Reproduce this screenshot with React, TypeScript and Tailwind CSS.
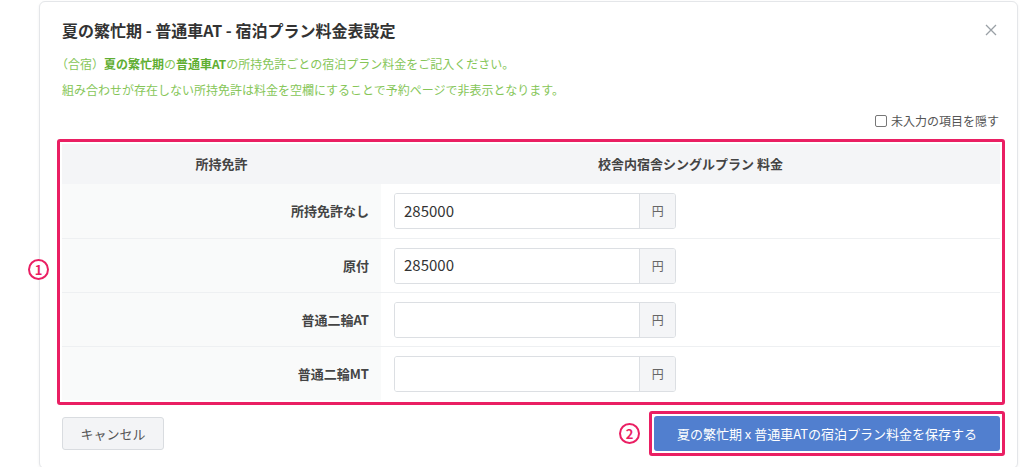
import React from "react";

const rows = [
  { label: "所持免許なし", value: "285000" },
  { label: "原付", value: "285000" },
  { label: "普通二輪AT", value: "" },
  { label: "普通二輪MT", value: "" },
];

const Mark = ({ n }: { n: string }) => (
  <span className="flex h-[21px] w-[21px] items-center justify-center rounded-full border-2 border-[#ea1f63] bg-white text-[13px] font-bold leading-none text-[#ea1f63]">
    {n}
  </span>
);

export default function App() {
  return (
    <div className="min-h-[467px] w-[1024px] bg-white font-['Noto_Sans_CJK_JP',sans-serif] text-[#333]">
      <div className="relative ml-[39px] mt-[1px] w-[979px] rounded-md border border-[#e4e6e9] bg-white pb-[12px] pl-[22px] pr-[17px] pt-[16px] shadow-[0_1px_3px_rgba(0,0,0,0.06)]">
        {/* header */}
        <div className="flex items-center justify-between">
          <h1 className="text-[16px] font-bold leading-[24px] text-[#333]">
            夏の繁忙期 - 普通車AT - 宿泊プラン料金表設定
          </h1>
          <button className="mr-[3px] text-[#9aa0a6]">
            <svg width="12" height="12" viewBox="0 0 12 12" stroke="currentColor" strokeWidth="1.3">
              <path d="M1 1l10 10M11 1L1 11" />
            </svg>
          </button>
        </div>

        <div className="mt-[9px] -ml-[6px] text-[12px] leading-[26px] text-[#86c658]">
          <p>
            （合宿）<b className="text-[#5fae32]">夏の繁忙期</b>の
            <b className="text-[#5fae32]">普通車AT</b>
            の所持免許ごとの宿泊プラン料金をご記入ください。
          </p>
          <p className="ml-[6px]">
            組み合わせが存在しない所持免許は料金を空欄にすることで予約ページで非表示となります。
          </p>
        </div>

        <div className="mt-[8px] flex h-[20px] items-center justify-end gap-[4px] pr-[1px] text-[12px] text-[#555]">
          <span className="h-[12px] w-[12px] rounded-[2px] border border-[#777] bg-white" />
          <span>未入力の項目を隠す</span>
        </div>

        {/* table, outlined */}
        <div className="relative -mx-[5px] mt-[8px] rounded-[3px] border-[3px] border-[#ea1f63] p-[2px]">
          <div className="absolute -left-[32px] top-[117px]">
            <Mark n="1" />
          </div>
          <div className="grid grid-cols-[319px_1fr]">
            <div className="flex h-[40px] items-center justify-center bg-[#f4f5f7] text-[13px] font-bold text-[#444]">
              所持免許
            </div>
            <div className="flex h-[40px] items-center justify-center bg-[#f4f5f7] text-[13px] font-bold text-[#444]">
              校舎内宿舎シングルプラン 料金
            </div>
            {rows.map((r, i) => (
              <React.Fragment key={r.label}>
                <div
                  className={`flex h-[54px] items-center justify-end bg-[#f9fafa] pr-[12px] text-[13px] font-bold text-[#444] ${
                    i > 0 ? "border-t border-[#eef0f2]" : ""
                  }`}
                >
                  {r.label}
                </div>
                <div
                  className={`flex h-[54px] items-center bg-white pl-[13px] ${
                    i > 0 ? "border-t border-[#eef0f2]" : ""
                  }`}
                >
                  <div className="flex h-[36px] w-[282px] overflow-hidden rounded-[3px] border border-[#dcdfe3]">
                    <input
                      defaultValue={r.value}
                      className="w-[246px] bg-white px-[9px] text-[15px] text-[#333] outline-none"
                    />
                    <span className="flex w-[36px] items-center justify-center border-l border-[#dcdfe3] bg-[#f4f5f7] text-[12px] text-[#666]">
                      円
                    </span>
                  </div>
                </div>
              </React.Fragment>
            ))}
          </div>
        </div>

        {/* footer */}
        <div className="-mr-[5px] mt-[6px] flex items-center justify-between">
          <button className="h-[33px] w-[102px] rounded-[3px] border border-[#d9dce0] bg-[#f3f4f6] text-[13px] text-[#555]">
            キャンセル
          </button>
          <div className="flex items-center gap-[9px]">
            <Mark n="2" />
            <div className="rounded-[3px] border-[3px] border-[#ea1f63] p-[2px]">
              <button className="h-[35px] w-[346px] rounded-[3px] bg-[#517fcf] text-[13px] text-white">
                夏の繁忙期 x 普通車ATの宿泊プラン料金を保存する
              </button>
            </div>
          </div>
        </div>
      </div>
    </div>
  );
}
